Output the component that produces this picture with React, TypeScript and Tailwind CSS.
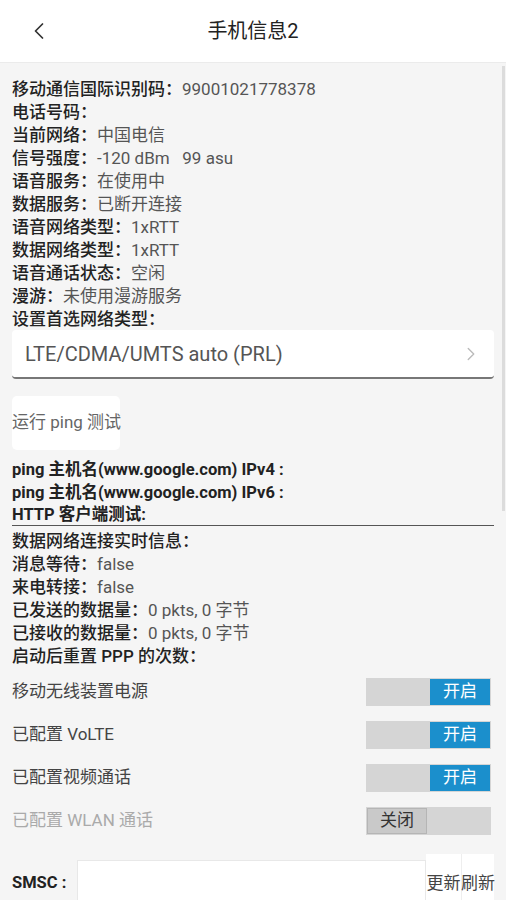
import { ChevronLeft, ChevronRight } from "lucide-react";

const FONT = { fontFamily: 'Roboto, "Noto Sans CJK SC", "Noto Sans", sans-serif' };

// label / value pairs for the radio info block
const infoTop: [string, string][] = [
  ["移动通信国际识别码：", "99001021778378"],
  ["电话号码：", ""],
  ["当前网络：", "中国电信"],
  ["信号强度：", "-120 dBm   99 asu"],
  ["语音服务：", "在使用中"],
  ["数据服务：", "已断开连接"],
  ["语音网络类型：", "1xRTT"],
  ["数据网络类型：", "1xRTT"],
  ["语音通话状态：", "空闲"],
  ["漫游：", "未使用漫游服务"],
  ["设置首选网络类型：", ""],
];

const infoBottom: [string, string][] = [
  ["数据网络连接实时信息：", ""],
  ["消息等待：", "false"],
  ["来电转接：", "false"],
  ["已发送的数据量：", "0 pkts, 0 字节"],
  ["已接收的数据量：", "0 pkts, 0 字节"],
  ["启动后重置 PPP 的次数：", ""],
];

const toggles = [
  { label: "移动无线装置电源", on: true },
  { label: "已配置 VoLTE", on: true },
  { label: "已配置视频通话", on: true },
  { label: "已配置 WLAN 通话", on: false },
];

function InfoLine({ label, value }: { label: string; value: string }) {
  return (
    <div className="h-[23px] pt-[3px] leading-[20px] text-[17px] whitespace-pre">
      <span className="text-[#222] font-medium">{label}</span>
      <span className="text-[#555]">{value}</span>
    </div>
  );
}

function Toggle({ on }: { on: boolean }) {
  return (
    <div className="w-[125px] h-[28px] bg-[#d5d5d5] flex p-px">
      {on ? (
        <>
          <div className="flex-1" />
          <div className="w-[60px] bg-[#1b8fcc] text-white text-[17px] flex items-center justify-center">
            开启
          </div>
        </>
      ) : (
        <>
          <div className="w-[60px] bg-[#c9c9c9] border border-[#b5b5b5] text-[#333] text-[17px] flex items-center justify-center">
            关闭
          </div>
          <div className="flex-1" />
        </>
      )}
    </div>
  );
}

export default function App() {
  return (
    <div className="w-[506px] h-[900px] overflow-hidden bg-[#f5f5f5] flex flex-col" style={FONT}>
      {/* Header */}
      <div className="h-[63px] bg-white border-b border-[#ebebeb] flex items-center relative shrink-0">
        <ChevronLeft className="ml-[25px] text-[#333]" size={28} strokeWidth={1.5} />
        <div className="absolute inset-0 flex items-center justify-center text-[20px] text-[#222]">
          手机信息2
        </div>
      </div>

      <div className="flex flex-1 min-h-0">
        <div className="flex-1 pl-[12px] pr-[8px] pt-[13px]">
          {infoTop.map(([l, v]) => (
            <InfoLine key={l} label={l} value={v} />
          ))}

          {/* Preferred network dropdown */}
          <div className="mt-[1px] h-[49px] bg-white rounded-[4px] border-b-2 border-[#777] flex items-center justify-between pl-[13px] pr-[12px]">
            <span className="text-[20px] text-[#555]">LTE/CDMA/UMTS auto (PRL)</span>
            <ChevronRight className="text-[#bbb]" size={22} strokeWidth={1.5} />
          </div>

          <div className="mt-[17px] w-[108px] h-[54px] bg-white rounded-[5px] flex items-center text-[17px] text-[#666] whitespace-nowrap">
            运行 ping 测试
          </div>

          <div className="mt-[8px] text-[16.5px] font-bold text-[#222]">
            <div className="h-[23px] leading-[23px]">ping 主机名(www.google.com) IPv4 :</div>
            <div className="h-[23px] leading-[23px]">ping 主机名(www.google.com) IPv6 :</div>
            <div className="h-[22px] leading-[22px] border-b border-[#555]">HTTP 客户端测试:</div>
          </div>

          <div className="mt-[2px]">
            {infoBottom.map(([l, v]) => (
              <InfoLine key={l} label={l} value={v} />
            ))}
          </div>

          <div className="mt-[12px] flex flex-col gap-[15px]">
            {toggles.map((t) => (
              <div key={t.label} className="flex items-center justify-between pr-[3px]">
                <span className={`text-[17px] ${t.on ? "text-[#444]" : "text-[#aaa]"}`}>{t.label}</span>
                <Toggle on={t.on} />
              </div>
            ))}
          </div>

          {/* SMSC row */}
          <div className="mt-[19px] flex items-end">
            <span className="text-[16.5px] font-bold text-[#222] w-[65px] pb-[6px]">SMSC :</span>
            <div className="w-[349px] h-[42px] bg-white border border-[#e8e8e8]" />
            <div className="h-[48px] w-[35px] bg-white flex items-end justify-center pb-[6px] text-[17px] text-[#444] whitespace-nowrap">
              更新
            </div>
            <div className="h-[48px] w-[33px] bg-white border-l border-[#eee] flex items-end justify-center pb-[6px] text-[17px] text-[#444] whitespace-nowrap">
              刷新
            </div>
          </div>
        </div>

        {/* scrollbar */}
        <div className="w-[6px] pt-[3px]">
          <div className="w-[3px] h-[445px] bg-[#dcdcdc]" />
        </div>
      </div>
    </div>
  );
}
